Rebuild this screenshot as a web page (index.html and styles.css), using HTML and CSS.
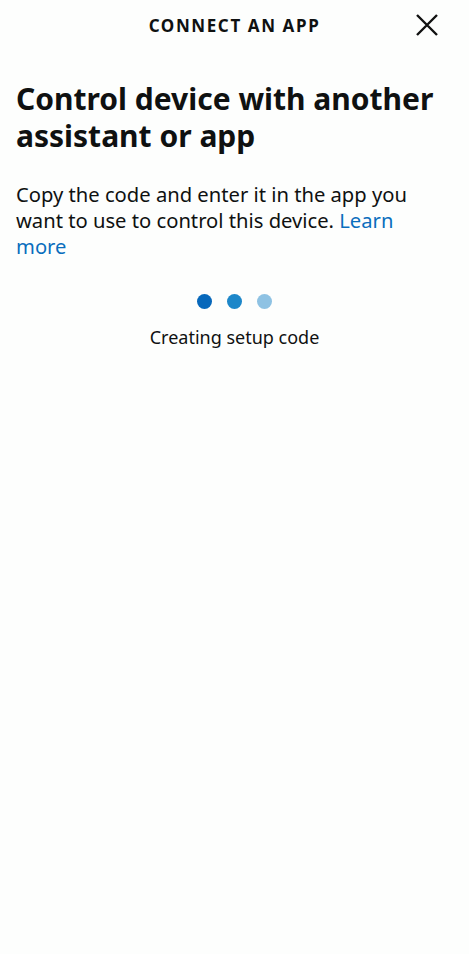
FILE: index.html
```html
<!DOCTYPE html>
<html lang="en">
<head>
    <meta charset="UTF-8">
    <meta name="viewport" content="width=device-width, initial-scale=1.0">
    <title>Connect an app</title>
    <link rel="stylesheet" href="styles.css">
</head>
<body>
<div class="screen">
    <header class="topbar">
        <span class="topbar-title">CONNECT AN APP</span>
        <button class="close" aria-label="Close">
            <svg width="24" height="24" viewBox="0 0 24 24"><path d="M2 2L22 22M22 2L2 22" stroke="#111" stroke-width="2.4" fill="none"/></svg>
        </button>
    </header>

    <h1>Control device with another assistant or app</h1>
    <p class="intro">Copy the code and enter it in the app you want to use to control this device. <a href="#">Learn more</a></p>

    <div class="loader">
        <div class="dots">
            <span class="dot d1"></span>
            <span class="dot d2"></span>
            <span class="dot d3"></span>
        </div>
        <p class="status">Creating setup code</p>
    </div>
</div>
</body>
</html>
```

FILE: styles.css
```css
body { margin: 0; background: #fdfefd; font-family: "Noto Sans", "Open Sans", sans-serif; color: #0f1111; }
.screen { padding: 0 16px; }
.topbar { position: relative; height: 50px; display: flex; align-items: center; justify-content: center; }
.topbar-title { font-size: 17px; font-weight: 700; letter-spacing: 1.6px; }
.close { position: absolute; right: 14px; top: 13px; background: none; border: 0; padding: 0; width: 24px; height: 24px; }
h1 { font-size: 30px; line-height: 37px; font-weight: 700; margin: 30px 0 0; }
.intro { font-size: 20.2px; line-height: 26px; margin: 27px 0 0; max-width: 410px; }
.intro a { color: #0a6ebd; text-decoration: none; }
.loader { display: flex; flex-direction: column; align-items: center; margin-top: 35px; }
.dots { display: flex; gap: 15px; }
.dot { width: 15px; height: 15px; border-radius: 50%; }
.d1 { background: #0768bb; }
.d2 { background: #1d87c9; }
.d3 { background: #8ec2e3; }
.status { font-size: 18px; line-height: 24px; margin: 16px 0 0; }
```
